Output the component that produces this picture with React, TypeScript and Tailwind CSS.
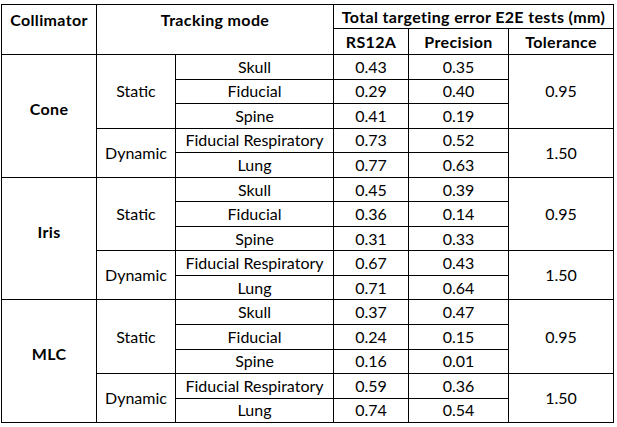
import React from 'react'

type Group = {
  name: string
  rows: { mode: string; site: string; rs: string; pr: string }[]
}

const groups: Group[] = [
  {
    name: 'Cone',
    rows: [
      { mode: 'Static', site: 'Skull', rs: '0.43', pr: '0.35' },
      { mode: 'Static', site: 'Fiducial', rs: '0.29', pr: '0.40' },
      { mode: 'Static', site: 'Spine', rs: '0.41', pr: '0.19' },
      { mode: 'Dynamic', site: 'Fiducial Respiratory', rs: '0.73', pr: '0.52' },
      { mode: 'Dynamic', site: 'Lung', rs: '0.77', pr: '0.63' },
    ],
  },
  {
    name: 'Iris',
    rows: [
      { mode: 'Static', site: 'Skull', rs: '0.45', pr: '0.39' },
      { mode: 'Static', site: 'Fiducial', rs: '0.36', pr: '0.14' },
      { mode: 'Static', site: 'Spine', rs: '0.31', pr: '0.33' },
      { mode: 'Dynamic', site: 'Fiducial Respiratory', rs: '0.67', pr: '0.43' },
      { mode: 'Dynamic', site: 'Lung', rs: '0.71', pr: '0.64' },
    ],
  },
  {
    name: 'MLC',
    rows: [
      { mode: 'Static', site: 'Skull', rs: '0.37', pr: '0.47' },
      { mode: 'Static', site: 'Fiducial', rs: '0.24', pr: '0.15' },
      { mode: 'Static', site: 'Spine', rs: '0.16', pr: '0.01' },
      { mode: 'Dynamic', site: 'Fiducial Respiratory', rs: '0.59', pr: '0.36' },
      { mode: 'Dynamic', site: 'Lung', rs: '0.74', pr: '0.54' },
    ],
  },
]

const cell = 'border border-black text-center align-middle p-0 leading-none'
const bold = 'font-bold tracking-[0.35px]'

export default function App() {
  return (
    <div className="w-[617px] h-[427px] bg-white pt-1 pl-px text-black font-['Lato',sans-serif] text-[16px]">
      <table className="table-fixed border-collapse w-[613px]">
        <colgroup>
          <col className="w-[95px]" />
          <col className="w-[79px]" />
          <col className="w-[158px]" />
          <col className="w-[75px]" />
          <col className="w-[100px]" />
          <col className="w-[105px]" />
        </colgroup>
        <thead>
          <tr className="h-[24px]">
            <th rowSpan={2} className={`${cell} ${bold} align-top pt-[7px]`}>
              Collimator
            </th>
            <th rowSpan={2} colSpan={2} className={`${cell} ${bold} align-top pt-[7px]`}>
              Tracking mode
            </th>
            <th colSpan={3} className={`${cell} ${bold}`}>
              Total targeting error E2E tests (mm)
            </th>
          </tr>
          <tr className="h-[26px]">
            <th className={`${cell} ${bold}`}>RS12A</th>
            <th className={`${cell} ${bold}`}>Precision</th>
            <th className={`${cell} ${bold} align-top pt-[5px]`}>Tolerance</th>
          </tr>
        </thead>
        <tbody>
          {groups.map((g) =>
            g.rows.map((r, i) => (
              <tr key={g.name + i} className="h-[24.55px]">
                {i === 0 && (
                  <td rowSpan={5} className={`${cell} ${bold} pb-[14px]`}>
                    {g.name}
                  </td>
                )}
                {i === 0 && (
                  <td rowSpan={3} className={cell}>
                    Static
                  </td>
                )}
                {i === 3 && (
                  <td rowSpan={2} className={cell}>
                    Dynamic
                  </td>
                )}
                <td className={cell}>{r.site}</td>
                <td className={cell}>{r.rs}</td>
                <td className={cell}>{r.pr}</td>
                {i === 0 && (
                  <td rowSpan={3} className={cell}>
                    0.95
                  </td>
                )}
                {i === 3 && (
                  <td rowSpan={2} className={cell}>
                    1.50
                  </td>
                )}
              </tr>
            ))
          )}
        </tbody>
      </table>
    </div>
  )
}
